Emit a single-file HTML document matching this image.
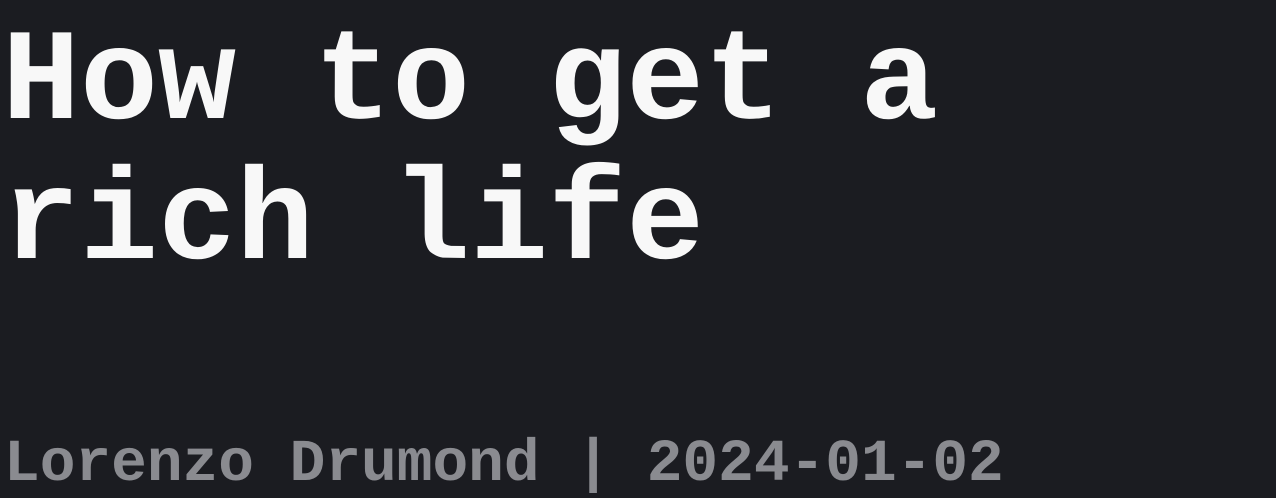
<!DOCTYPE html>
<html>
<head>
<meta charset="utf-8">
<style>
html,body{margin:0;padding:0;}
body{width:1276px;height:498px;background:#1b1c21;overflow:hidden;position:relative;font-family:"Liberation Mono",monospace;}
h1{position:absolute;left:2px;top:15px;margin:0;font-size:130px;line-height:140px;font-weight:bold;color:#f8f8f8;white-space:nowrap;}
.by{position:absolute;left:4px;top:434px;font-size:59.5px;line-height:60px;font-weight:bold;color:#8a8b90;white-space:nowrap;}
</style>
</head>
<body>
<h1>How to get a<br>rich life</h1>
<div class="by">Lorenzo Drumond | 2024-01-02</div>
</body>
</html>
